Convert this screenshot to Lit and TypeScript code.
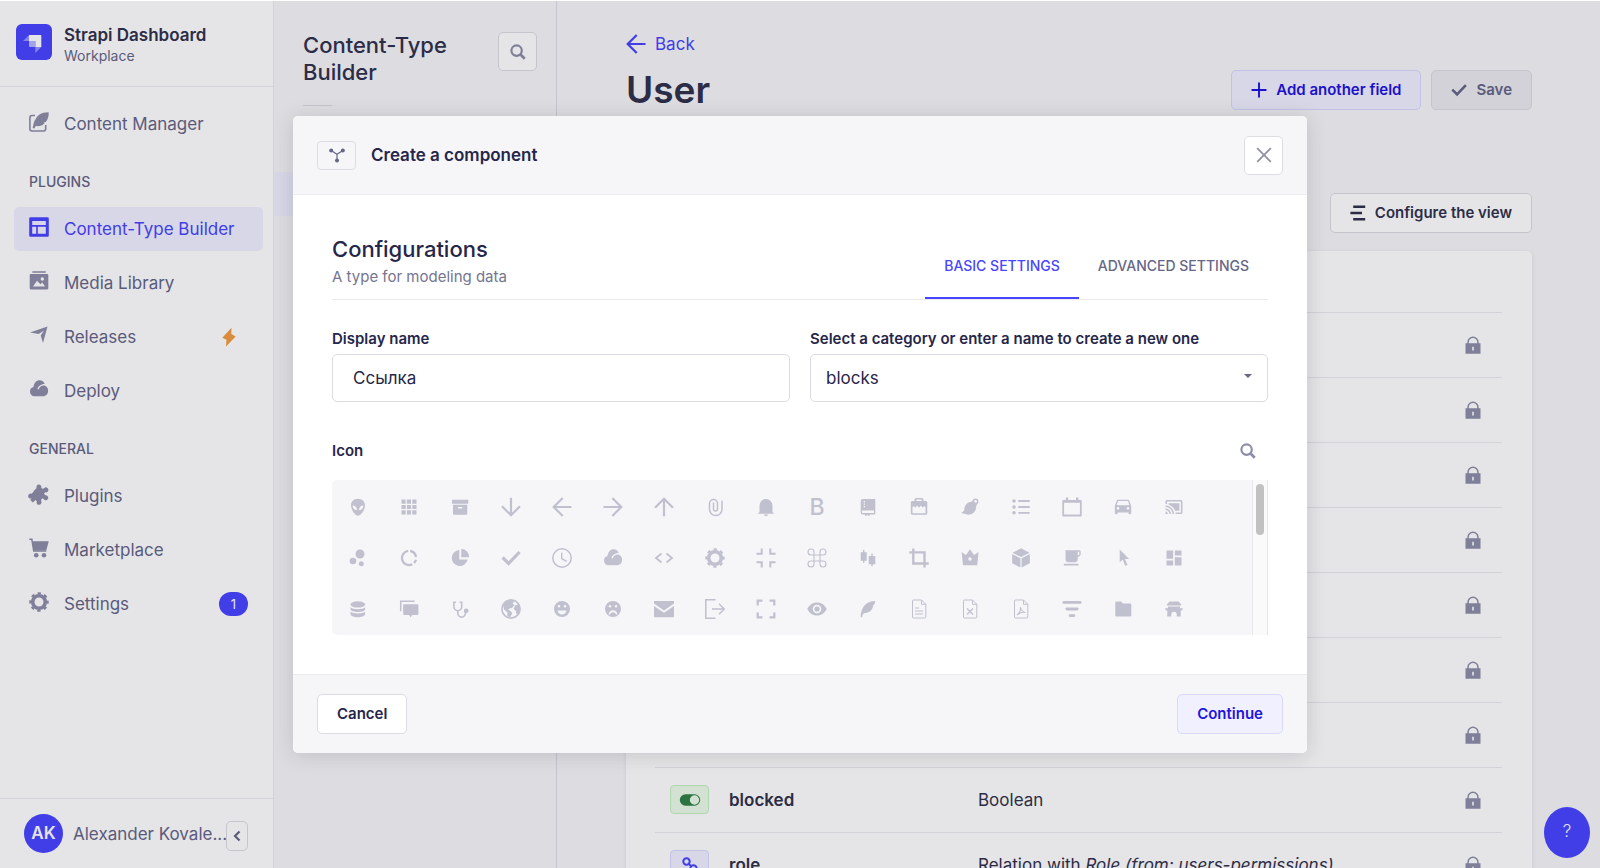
import { LitElement, html, css, svg, nothing, type TemplateResult } from "lit";
import { customElement, property } from "lit/decorators.js";

type Glyph = { box?: string; draw: TemplateResult };

/* Filled shape, even-odd so inner contours become holes. */
const fill = (d: string) => svg`<path fill="currentColor" fill-rule="evenodd" d=${d}></path>`;
/* Outlined shape. */
const line = (d: string, w = 1.5, cap = "butt") =>
  svg`<path fill="none" stroke="currentColor" stroke-width=${w} stroke-linecap=${cap} stroke-linejoin=${cap === "round" ? "round" : "miter"} d=${d}></path>`;
const dot = (x: number, y: number, r: number) => svg`<circle fill="currentColor" cx=${x} cy=${y} r=${r}></circle>`;

const sheet = "M4.5 1h8l4.3 4.3V18a1 1 0 0 1-1 1h-11.300a1 1 0 0 1-1-1V2a1 1 0 0 1 1-1zM12.500 1v4.300h4.300";
const face = "M10 2a8 8 0 1 0 0 16 8 8 0 0 0 0-16zM7 6a1.300 1.300 0 1 1 0 2.600 1.300 1.300 0 0 1 0-2.600zM13 6a1.300 1.300 0 1 1 0 2.600 1.300 1.300 0 0 1 0-2.600z";

const glyphs: Record<string, Glyph> = {
  alien: { draw: fill("M10 1.700c4.200 0 7 2.800 7 6.600 0 4.600-4 10.400-7 10.400S3 12.900 3 8.300c0-3.800 2.800-6.600 7-6.600zM4.700 8.500c0 2.700 1.500 4.600 4.300 4.600 0-2.800-1.700-4.600-4.300-4.600zM15.300 8.500c0 2.700-1.500 4.600-4.300 4.600 0-2.800 1.700-4.600 4.300-4.600z") },
  apps: { draw: fill("M2.500 2.500h4.200v4.200H2.500zM7.900 2.500h4.200v4.200H7.900zM13.300 2.500h4.200v4.200h-4.200zM2.500 7.900h4.200v4.200H2.500zM7.900 7.900h4.200v4.200H7.900zM13.300 7.900h4.200v4.200h-4.200zM2.500 13.300h4.200v4.200H2.500zM7.900 13.300h4.200v4.200H7.900zM13.300 13.300h4.200v4.200h-4.200z") },
  archive: { draw: fill("M2 2.700h16.300v4H2zM3 7.700h14.300v9a1 1 0 0 1-1 1H4a1 1 0 0 1-1-1zM8 10v1.600h4.300V10z") },
  arrowDown: { draw: line("M10 .700v17M1 9.300l9 9 9-9", 2.200) },
  arrowLeft: { draw: line("M19.500 10H2M10.700 1l-9 9 9 9", 2.200) },
  arrowRight: { draw: line("M.500 10H18M9.300 1l9 9-9 9", 2.200) },
  arrowUp: { draw: line("M10 19.300v-17M1 10.700l9-9 9 9", 2.200) },
  attach: { draw: line("M17 3.700v8.600a6.200 6.200 0 0 1-12.500 0V6.500a4 4 0 0 1 8 0V12a2 2 0 0 1-4 0V5.500", 1.500) },
  bell: { draw: fill("M3.500 15V8.500a6.500 6.500 0 0 1 13 0V15l1.700 1.700H1.800zM8 17.600h4a2 1.700 0 0 1-4 0z") },
  bold: { draw: svg`<text x="10" y="18" text-anchor="middle" font-size="23" font-weight="500" fill="currentColor">B</text>` },
  book: { draw: fill("M4.700 2h12.600v15.500h-5.800v1.800L9.300 18l-2.200 1.300v-1.800H4.700a2 2 0 0 1-2-2V4a2 2 0 0 1 2-2zM5.700 4v1.300H7V4zM5.700 6.500v1.300H7V6.500zM5.700 9v1.300H7V9zM5 13.500a1 1 0 0 0 0 2.400h11v-2.400z") },
  briefcase: { draw: fill("M7 1h6a1.500 1.500 0 0 1 1.500 1.500V4h2.300a1.500 1.500 0 0 1 1.500 1.500v10.800a1.500 1.500 0 0 1-1.500 1.500H3.300a1.500 1.500 0 0 1-1.500-1.500V5.500A1.500 1.500 0 0 1 3.300 4h2.200V2.500A1.500 1.500 0 0 1 7 1zM7.300 2.500V4h5.400V2.500zM3.500 10v6.200h13V10l-1.500-.8-1.500 1.600L12 8.500l-2 2.200-2-2.200-1.500 2.300L5 9.200z") },
  brush: { draw: svg`${fill("M1.300 16l3-2.500c-.3-5 2.700-8.300 7.200-8.800l1.700-1.400 3.800 4.200-.8 1.500c.3 5.500-4 8.800-8 8.700z")}${svg`<circle cx="15.500" cy="4.500" r="2.200" fill="none" stroke="currentColor" stroke-width="1.500"></circle>`}` },
  bullets: { draw: svg`${dot(3, 4, 1.800)}${dot(3, 10, 1.800)}${dot(3, 15.800, 1.800)}${line("M7.300 4h11.400M7.300 10h11.400M7.300 15.800h11.400", 1.800)}` },
  calendar: { draw: svg`${line("M1.200 4h17.600v14.500H1.200z", 1.800, "round")}${line("M1 4.500h18M5 .500V4M15.200.500V4", 2.400)}` },
  car: { box: "1 2 22 22", draw: fill("M18.920 6.010C18.720 5.420 18.160 5 17.500 5h-11c-.66 0-1.210.42-1.420 1.010L3 12v8c0 .55.45 1 1 1h1c.55 0 1-.45 1-1v-1h12v1c0 .55.45 1 1 1h1c.55 0 1-.45 1-1v-8l-2.080-5.990zM6.500 16c-.83 0-1.500-.67-1.500-1.500S5.670 13 6.500 13s1.500.67 1.500 1.500S7.330 16 6.500 16zm11 0c-.83 0-1.500-.67-1.500-1.500s.67-1.500 1.500-1.500 1.500.67 1.500 1.500-.67 1.500-1.500 1.500zM5 11l1.500-4.500h11L19 11H5z") },
  cast: { box: "-1 -1 26 26", draw: fill("M1 18v3h3c0-1.660-1.340-3-3-3zm0-4v2c2.760 0 5 2.240 5 5h2c0-3.870-3.130-7-7-7zm18-7H5v1.630c3.960 1.280 7.090 4.410 8.370 8.370H19V7zM1 10v2c4.970 0 9 4.030 9 9h2c0-6.080-4.930-11-11-11zm20-7H3c-1.100 0-2 .9-2 2v3h2V5h18v14h-7v2h7c1.100 0 2-.9 2-2V5c0-1.100-.9-2-2-2z") },
  bubbles: { draw: svg`${dot(12, 6, 4.500)}${dot(5, 13, 3.300)}${dot(13.300, 15.700, 2.500)}` },
  donut: { draw: line("M9.200 2.950A7.100 7.100 0 1 0 13.300 16.300M15 15A7.100 7.100 0 0 0 16.900 11.700M17 9.100A7.100 7.100 0 0 0 11.100 3", 2.300) },
  pie: { draw: fill("M9.300 2a8 8 0 1 0 8.300 9.500H9.300zM11.300 1a7.800 7.800 0 0 1 7.800 8.300h-7.800z") },
  check: { draw: line("M1.600 9.500l6 6L18.600 4", 3.200) },
  clock: { draw: svg`<circle cx="10" cy="10" r="9.200" fill="none" stroke="currentColor" stroke-width="1.500"></circle>${line("M9.700 4.800v5.700l5 2.800", 1.400)}` },
  cloud: { draw: fill("M5.500 17.300a4.800 4.800 0 0 1-1-9.400C5 4 7.600 1.300 10.500 1.300c2.600 0 4.600 1.500 5.200 3.800-4 0-6.300 2.400-7.300 5l1.200.4c1-2.600 2.800-4 5-4 2.600 0 4.500 2.300 4.500 5.300 0 3.200-2.200 5.500-5 5.500z") },
  code: { draw: line("M7.500 5.500L2 10l5.500 4.500M12.500 5.500L18 10l-5.500 4.500", 1.800) },
  cog: { draw: svg`<circle cx="10" cy="10" r="6.300" fill="none" stroke="currentColor" stroke-width="3.600"></circle><circle cx="10" cy="10" r="8.700" fill="none" stroke="currentColor" stroke-width="2" stroke-dasharray="3.416" stroke-dashoffset="1.708"></circle>` },
  collapse: { draw: line("M.500 5.700h5.200V.500M14.300.500v5.200h5.200M.500 14.200h5.200v5.300M19.500 14.200h-5.200v5.300", 2) },
  command: { draw: line("M7 4v12a3 3 0 1 1-3-3h12a3 3 0 1 1-3 3V4a3 3 0 1 1 3 3H4a3 3 0 1 1 3-3z", 1.100) },
  candles: { draw: fill("M5 1.700h1.400v2.500h2.300v8.500H6.400v2H5v-2H2.700V4.200H5zM13.300 5.500h1.400V8h2.600v8.300h-2.600v2h-1.400v-2h-2.600V8h2.600z") },
  crop: { draw: line("M4.300.500v15h15.400M.300 4.400h15.200v15.200", 2.400) },
  crown: { draw: fill("M3 17.300L1.600 4l4.400 3L10 1.300 14 7l4.600-3-1.400 13.300zM10 9.300a1.700 1.700 0 1 0 0 3.400 1.700 1.700 0 0 0 0-3.400z") },
  cube: { draw: fill("M10 .300l8.500 4.500L10 9.100 1.500 4.800zM1.200 6l8.200 4.200v9.400L1.200 15.200zM18.800 6l-8.200 4.200v9.400l8.200-4.400z") },
  cup: { draw: fill("M3.500 2.300h14.200a1.200 1.200 0 0 1 1 1.200v2.600a2.600 2.600 0 0 1-3 2.600v2.600a3 3 0 0 1-3 3H6.500a3 3 0 0 1-3-3zM15.700 3.800v3.400h.8a1 1 0 0 0 .8-1V3.800zM1.800 15.700h14.700v1.800H1.800z") },
  cursor: { draw: fill("M6.700 1.500v12.800l3-2.700 2.400 6.200 2.400-.9-2.600-6h4.200z") },
  dashboard: { box: "0 0 24 24", draw: fill("M3 13h8V3H3v10zm0 8h8v-6H3v6zm10 0h8V11h-8v10zm0-18v6h8V3h-8z") },
  database: { draw: svg`<ellipse cx="9.800" cy="5.400" rx="7.300" ry="3.200" fill="currentColor"></ellipse>${fill("M2.500 8.200c1.500 2.600 13.100 2.600 14.600 0v2.200c-.8 3.300-13.800 3.300-14.600 0zM2.500 12.600c1.500 2.600 13.100 2.600 14.600 0v2.600c-.8 4-13.800 4-14.600 0z")}` },
  discuss: { draw: svg`${line("M1.700 12.300V2.300h14", 1.500)}${fill("M5 5.300h13.600a.8.8 0 0 1 .8.800v9a.8.8 0 0 1-.8.800h-5.400l-1.500 2.500-1.500-2.500H5a.8.8 0 0 1-.8-.8v-9a.8.8 0 0 1 .8-.8z")}` },
  doctor: { draw: svg`${line("M6 3.300H3.900v4.500a3.900 3.900 0 0 0 7.800 0V3.300H9.600M7.800 11.700v2.600a3.800 3.800 0 0 0 7.600 0V13", 1.600)}${dot(16.200, 11.800, 2.400)}` },
  earth: { draw: svg`<circle cx="10" cy="10" r="9.100" fill="none" stroke="currentColor" stroke-width="1.600"></circle>${fill("M2 6C4 2.500 7 1.200 11 1.200l2 1.600-1.500 2L13.500 6l-2.500 3-2.800.5-1 1.500 2.600 1 1.400 2.500L9 18.500 6.300 17l.2-3.500L3 10.500zM14 6.500l4-1.500 1 4-1 5-2.500 1.500-.5-3.500L12.700 10z")}` },
  smile: { draw: fill(face + "M5.500 11.500h9c-.5 2.500-2.300 4-4.500 4s-4-1.500-4.500-4z") },
  sad: { draw: fill(face + "M5.500 15.500c.5-2.700 2.300-4.200 4.500-4.200s4 1.500 4.500 4.200H13c-.5-1.500-1.500-2.300-3-2.300s-2.500.8-3 2.300z") },
  envelope: { draw: fill("M0 2h20v2.600L10 11.500 0 4.600zM0 7l10 6.800L20 7v11.300H0z") },
  exit: { draw: line("M10.500.8H.800v18.400h9.700M7 10h12M14 4.800l5.200 5.200-5.200 5.200", 1.500) },
  expand: { draw: line("M1.700 6.500V1.700h4.800M13.500 1.700h4.800v4.800M1.700 13.500v4.800h4.800M18.300 13.500v4.800h-4.800", 2.200) },
  eye: { draw: fill("M10 3.500c4.500 0 8 2.700 9.700 6.500-1.700 3.800-5.200 6.500-9.700 6.500S2 13.800.300 10C2 6.200 5.500 3.500 10 3.500zM10 5.700a4.300 4.300 0 1 0 0 8.600 4.300 4.300 0 0 0 0-8.600zM10 7.400a2.600 2.600 0 1 1 0 5.200 2.600 2.600 0 0 1 0-5.200z") },
  feather: { draw: fill("M2.700 18.300C2.500 9 7.500 2 17.300 1.900c-.5 2.600-1.300 4.300-3 5.400l.9.300c-1.200 3.600-3.700 6-7.400 6.500-2.200.2-3.200.5-3.600 4.200z") },
  file: { draw: svg`${line(sheet, 1)}${line("M6 9h4M6 12h8M6 15h8", 1)}` },
  fileError: { draw: svg`${line(sheet, 1)}${line("M7 9.500l6 6M13 9.500l-6 6", 1.200)}` },
  filePdf: { draw: svg`${line(sheet, 1)}${line("M9.500 8c.5 3 2 5 5 5.500-3-.6-6 .3-8.500 2.500 2.500-2 3.800-5 3.500-8z", 1.100)}` },
  filter: { draw: line("M1.800 3.400h16.400M4.800 10h10.400M8 16.600h4", 2.800, "round") },
  folder: { draw: fill("M3.300 2.600h4.900l1.800 2h7.300a1 1 0 0 1 1 1v11a1 1 0 0 1-1 1H3.300a1 1 0 0 1-1-1v-13a1 1 0 0 1 1-1z") },
  gate: { draw: fill("M5.500 2.500h9l3 3.200-1 .9h-13l-1-.9zM4 7.500h12v1.700h3l-.9 2.400h-1.400v5.800h-4v-2a2.700 2.700 0 0 0-5.400 0v2h-4v-5.800H1.900L1 9.200h3z") },

  write: { draw: svg`${line("M6 3.500H3A2.200 2.200 0 0 0 .900 5.700v11.100A2.200 2.200 0 0 0 3 19h11.500a2.200 2.200 0 0 0 2.200-2.200V13", 1.600)}${fill("M3.600 16C4.500 12 5 9.500 6.300 7l.2 1.200C7.500 3.500 12 .200 19.700.200c.2 4-.9 7.500-2.900 9.800l-2.200.2 1.200.9c-2.600 2.700-5.500 3.500-9 3l-1.600 2.400z")}` },
  layout: { draw: fill("M1.500.200h17a1.300 1.300 0 0 1 1.300 1.300v17a1.300 1.300 0 0 1-1.300 1.300h-17A1.300 1.300 0 0 1 .200 18.500v-17A1.300 1.300 0 0 1 1.500.200zM3.200 4v4h13.600V4zM3.200 9.700v7h4v-7zM8.800 9.700v7h8v-7z") },
  images: { draw: fill("M3.300.300h13.500v1.400H3.300zM1.800 3h16.400a1.200 1.200 0 0 1 1.100 1.200v13a1.200 1.200 0 0 1-1.100 1.200H1.800A1.200 1.200 0 0 1 .700 17.200v-13A1.200 1.200 0 0 1 1.800 3zM13.300 6.300a1.700 1.700 0 1 0 0 3.400 1.700 1.700 0 0 0 0-3.400zM4 15.500h12L13.300 11.500l-1.800 1.700L8 9.800z") },
  plane: { draw: fill("M1 7.500L18.500 1.500 14 18 11.700 10.500 15 5.500 9.700 9z") },
  bolt: { draw: fill("M12.500.800L3.300 10.800l4.200 2-.5 6.600 9.700-10-4.400-2.300z") },
  puzzle: { draw: fill("M7.600 4A2.500 2.500 0 1 1 12.300 3.700l1.600 1.400 1.400-1.100a2.500 2.500 0 1 1 1 4.300l-1.400 1.500 1.500 1.500a2.500 2.500 0 1 1-.8 4.700l-1.900-1.700-1.600 1.500.3 1.700a2.500 2.500 0 1 1-4.600-.2l-1.300-1.400-2.600 2.700-2.700-2.700 1.400-1.500a2.500 2.500 0 1 1-.2-4.700l2-1.700a2.500 2.500 0 0 1 1.300-2z") },
  cart: { draw: svg`${line("M.300 1.200h2.500l2 11.800h12.500", 1.600)}${fill("M3 3.200h16.800l-2.600 9.300H4.600z")}${dot(7.200, 17.200, 2.300)}${dot(15, 17.200, 2.300)}` },
  chevron: { draw: line("M12.500 5.500L8 10l4.500 4.500", 2.200) },
  search: { draw: svg`<circle cx="8.600" cy="8.600" r="5.200" fill="none" stroke="currentColor" stroke-width="2.200"></circle>${line("M12.300 12.300l4.400 4.400", 2.800)}` },
  plus: { draw: line("M10 .700v18.600M.700 10h18.600", 2.400) },
  close: { draw: line("M3.200 3.200l13.600 13.600M16.800 3.200L3.200 16.800", 1.700) },
  stack: { draw: line("M4 2.300h15M.500 10h14.500M4 17.700h15", 3.200) },
  lock: { draw: fill("M2.500 8.300h1.800V7.200a5.700 5.700 0 0 1 11.400 0v1.100h1.800v10.500H2.500zM5.800 8.300h8.400V7.200a4.200 4.200 0 0 0-8.400 0zM9.200 11.700v3.800h1.600v-3.800z") },
  branch: { draw: svg`${dot(2.700, 4.500, 2.500)}${dot(17.300, 4.500, 2.500)}${dot(10, 17, 2.500)}${line("M2.700 4.500L10 9l7.300-4.500M10 9v7", 1.500)}` },
  toggle: { draw: fill("M5.500 4.300h9a5.700 5.700 0 0 1 0 11.400h-9a5.700 5.700 0 0 1 0-11.400zM14.500 5.300a4.700 4.700 0 1 0 0 9.400 4.700 4.700 0 0 0 0-9.400z") },
  link: { draw: svg`<circle cx="6.500" cy="6.500" r="3.200" fill="none" stroke="currentColor" stroke-width="2"></circle><circle cx="13.500" cy="13.500" r="3.200" fill="none" stroke="currentColor" stroke-width="2"></circle>${line("M8.500 8.500l3 3", 2)}` },
};

const pickerIcons = [
  "alien", "apps", "archive", "arrowDown", "arrowLeft", "arrowRight", "arrowUp", "attach", "bell", "bold", "book", "briefcase", "brush", "bullets", "calendar", "car", "cast",
  "bubbles", "donut", "pie", "check", "clock", "cloud", "code", "cog", "collapse", "command", "candles", "crop", "crown", "cube", "cup", "cursor", "dashboard",
  "database", "discuss", "doctor", "earth", "smile", "sad", "envelope", "exit", "expand", "eye", "feather", "file", "fileError", "filePdf", "filter", "folder", "gate",
];

@customElement("ui-icon")
export class UiIcon extends LitElement {
  @property() name = "";
  static styles = css`
    :host { display: inline-flex; width: 20px; height: 20px; flex: none; }
    svg { width: 100%; height: 100%; display: block; overflow: visible; }
  `;
  render() {
    const g = glyphs[this.name];
    return g ? html`<svg viewBox=${g.box ?? "0 0 20 20"} aria-hidden="true">${g.draw}</svg>` : nothing;
  }
}

const base = css`
  :host, *, *::before, *::after { box-sizing: border-box; }
  :host { font-family: Inter, "Liberation Sans", sans-serif; font-size: 17px; line-height: 24px; color: #32324d; }
  h1, h2, h3, p, ul { margin: 0; padding: 0; font-size: inherit; font-weight: inherit; }
  ul { list-style: none; }
  button, input, select { font: inherit; color: inherit; margin: 0; }
  a { color: inherit; text-decoration: none; }
  .btn {
    display: inline-flex; align-items: center; justify-content: center; gap: 9px; flex: none;
    height: 40px; padding: 0 19px; border: 1px solid #dcdce4; border-radius: 5px;
    background: #fff; font-size: 15px; line-height: 20px; font-weight: 600; white-space: nowrap;
  }
  .btn.secondary { background: #f0f0ff; border-color: #d9d8ff; color: #1f14e0; }
  .btn.disabled { background: #eaeaef; border-color: #dcdce4; color: #666687; }
  .btn ui-icon { width: 16px; height: 16px; }
  .btn.square { width: 39px; height: 39px; padding: 0; color: #8e8ea9; }
  .btn.square ui-icon { width: 20px; height: 20px; }
`;

@customElement("side-nav")
export class SideNav extends LitElement {
  static styles = [base, css`
    :host { display: flex; flex-direction: column; width: 274px; flex: none; background: #fff; border-right: 1px solid #eaeaef; }
    .brand { display: flex; align-items: flex-start; gap: 12px; height: 86px; padding: 23px 16px 0; border-bottom: 1px solid #eaeaef; }
    .logo { width: 36px; height: 36px; flex: none; }
    .name { font-weight: 600; line-height: 22px; }
    .place { font-size: 14px; line-height: 20px; color: #666687; }
    nav { flex: 1; padding: 15px 10px 0 14px; }
    .group { margin: 28px 15px 17px; font-size: 14px; line-height: 16px; font-weight: 500; color: #666687; }
    ul { display: grid; gap: 10px; }
    .item { display: flex; align-items: center; gap: 15px; height: 44px; padding: 0 15px; border-radius: 5px; color: #666687; }
    .item ui-icon { margin-bottom: 4px; color: #8e8ea9; }
    .item span:first-of-type { flex: 1; }
    .item.active { background: #f0f0ff; color: #4945ff; }
    .item.active ui-icon { color: #4945ff; }
    .item ui-icon.bolt { color: #f29d41; margin: 0 9px 0 0; }
    .count { min-width: 29px; height: 24px; border-radius: 12px; background: #4945ff; color: #fff; font-size: 13px; line-height: 24px; text-align: center; }
    .user { display: flex; align-items: center; height: 70px; padding: 0 25px 0 24px; border-top: 1px solid #eaeaef; }
    .avatar { width: 39px; height: 39px; flex: none; border-radius: 50%; background: #4945ff; color: #fff; font-weight: 600; line-height: 39px; text-align: center; }
    .who { flex: 1; min-width: 0; margin-left: 10px; white-space: nowrap; color: #666687; }
    .fold { width: 22px; height: 30px; padding: 0; display: grid; place-items: center; border: 1px solid #dcdce4; border-radius: 5px; background: #fff; color: #666687; margin-top: 5px; }
    .fold ui-icon { width: 20px; height: 20px; }
  `];

  private item(icon: string, label: string, extra: unknown = nothing, active = false) {
    return html`<li><a class="item ${active ? "active" : ""}" href="#"><ui-icon name=${icon}></ui-icon><span>${label}</span>${extra}</a></li>`;
  }

  render() {
    return html`
      <header class="brand">
        <svg class="logo" viewBox="0 0 36 36" aria-hidden="true">
          <rect width="36" height="36" rx="6" fill="#4945ff"></rect>
          <path fill="#fff" d="M13 11h11.500a.8.8 0 0 1 .8.800V23h-6v-6H13z"></path>
          <path fill="#9593ff" d="M13 11v6H7z M19.300 23h6L19.300 29z"></path>
          <path fill="#b7b5ff" d="M13 17h5.500a.8.8 0 0 1 .8.800V23H13.800a.8.8 0 0 1-.8-.8z"></path>
        </svg>
        <div><div class="name">Strapi Dashboard</div><div class="place">Workplace</div></div>
      </header>
      <nav aria-label="Main">
        <ul>${this.item("write", "Content Manager")}</ul>
        <h2 class="group">PLUGINS</h2>
        <ul>
          ${this.item("layout", "Content-Type Builder", nothing, true)}
          ${this.item("images", "Media Library")}
          ${this.item("plane", "Releases", html`<ui-icon class="bolt" name="bolt"></ui-icon>`)}
          ${this.item("cloud", "Deploy")}
        </ul>
        <h2 class="group">GENERAL</h2>
        <ul>
          ${this.item("puzzle", "Plugins")}
          ${this.item("cart", "Marketplace")}
          ${this.item("cog", "Settings", html`<span class="count">1</span>`)}
        </ul>
      </nav>
      <footer class="user">
        <span class="avatar">AK</span>
        <span class="who">Alexander Kovale...</span>
        <button class="fold" aria-label="Collapse the navigation"><ui-icon name="chevron"></ui-icon></button>
      </footer>`;
  }
}

@customElement("sub-nav")
export class SubNav extends LitElement {
  static styles = [base, css`
    :host { display: block; width: 283px; flex: none; border-right: 1px solid #dcdce4; }
    .top { display: flex; justify-content: space-between; align-items: flex-start; gap: 16px; padding: 31px 19px 0 29px; }
    h2 { font-size: 22px; line-height: 27px; font-weight: 500; }
    .rule { width: 29px; height: 1px; margin: 19px 0 0 29px; background: #dcdce4; }
    .current { height: 44px; margin-top: 66px; background: #f0f0ff; }
  `];
  render() {
    return html`
      <div class="top">
        <h2>Content-Type Builder</h2>
        <button class="btn square" aria-label="Search"><ui-icon name="search"></ui-icon></button>
      </div>
      <div class="rule"></div>
      <div class="current"></div>`;
  }
}

type Field = { icon?: string; tone?: string; name?: string; kind?: unknown };
const fields: Field[] = [
  {}, {}, {}, {}, {}, {}, {},
  { icon: "toggle", tone: "green", name: "blocked", kind: "Boolean" },
  { icon: "link", tone: "blue", name: "role", kind: html`Relation with <i>Role (from: users-permissions)</i>` },
];

@customElement("type-view")
export class TypeView extends LitElement {
  static styles = [base, css`
    :host { display: block; flex: 1; min-width: 0; padding: 31px 68px 0 69px; }
    .back { display: flex; align-items: center; gap: 9px; width: max-content; color: #4945ff; }
    .head { display: flex; align-items: center; justify-content: space-between; height: 44px; margin-top: 12px; }
    h1 { font-size: 37px; line-height: 44px; font-weight: 600; }
    .actions { display: flex; gap: 10px; }
    .tools { display: flex; justify-content: flex-end; margin-top: 81px; }
    .card { margin-top: 18px; padding: 0 30px 0 29px; background: #fff; border-radius: 5px; box-shadow: 0 1px 4px rgba(33, 33, 52, 0.1); }
    table { width: 100%; border-collapse: collapse; table-layout: fixed; }
    th { height: 61px; padding: 0; }
    td { height: 65px; padding: 0; border-top: 1px solid #eaeaef; white-space: nowrap; }
    .c-name { width: 323px; }
    .c-lock { width: 39px; }
    .field { display: flex; align-items: center; gap: 20px; padding-left: 15px; font-weight: 600; }
    .tile { display: grid; place-items: center; width: 39px; height: 29px; border: 1px solid; border-radius: 4px; }
    .tile.green { background: #eafbe7; border-color: #c6f0c2; color: #328048; }
    .tile.blue { background: #f0f0ff; border-color: #d9d8ff; color: #4945ff; }
    .lock { color: #8e8ea9; display: block; }
  `];
  render() {
    return html`
      <a class="back" href="#"><ui-icon name="arrowLeft"></ui-icon>Back</a>
      <div class="head">
        <h1>User</h1>
        <div class="actions">
          <button class="btn secondary"><ui-icon name="plus"></ui-icon>Add another field</button>
          <button class="btn disabled" disabled><ui-icon name="check"></ui-icon>Save</button>
        </div>
      </div>
      <div class="tools"><button class="btn"><ui-icon name="stack"></ui-icon>Configure the view</button></div>
      <div class="card">
        <table aria-label="Fields">
          <colgroup><col class="c-name" /><col /><col class="c-lock" /></colgroup>
          <thead><tr><th aria-label="Name"></th><th aria-label="Type"></th><th aria-label="Lock"></th></tr></thead>
          <tbody>
            ${fields.map((f) => html`<tr>
              <td>${f.name ? html`<div class="field"><span class="tile ${f.tone}"><ui-icon name=${f.icon}></ui-icon></span>${f.name}</div>` : nothing}</td>
              <td>${f.kind ?? nothing}</td>
              <td><ui-icon class="lock" name="lock"></ui-icon></td>
            </tr>`)}
          </tbody>
        </table>
      </div>`;
  }
}

@customElement("component-dialog")
export class ComponentDialog extends LitElement {
  static styles = [base, css`
    :host { display: block; width: 1014px; max-width: 100%; background: #fff; border-radius: 5px; overflow: hidden; box-shadow: 0 2px 20px rgba(33, 33, 52, 0.16); color: #26264a; }
    .bar { display: flex; align-items: center; justify-content: space-between; height: 79px; padding: 0 24px; background: #f6f6f9; }
    .bar.top { border-bottom: 1px solid #eaeaef; }
    .bar.bottom { border-top: 1px solid #eaeaef; }
    .title { display: flex; align-items: center; gap: 15px; font-weight: 600; }
    .kind { display: grid; place-items: center; width: 39px; height: 29px; border: 1px solid #dcdce4; border-radius: 4px; color: #666687; }
    .kind ui-icon { width: 16px; height: 16px; }
    .body { padding: 40px 39px 39px; }
    .intro { display: flex; justify-content: space-between; align-items: flex-end; border-bottom: 1px solid #eaeaef; }
    h3 { font-size: 22px; line-height: 28px; font-weight: 500; }
    .hint { font-size: 15px; line-height: 20px; padding: 4px 0 12px; color: #75758f; }
    .tabs { display: flex; }
    .tab { height: 64px; padding: 0 19px; border: 0; border-bottom: 2px solid transparent; background: none; font-size: 14px; font-weight: 500; color: #666687; white-space: nowrap; }
    .tab.on { color: #4945ff; border-color: #4945ff; }
    .fields { display: grid; grid-template-columns: 1fr 1fr; gap: 20px; margin-top: 29px; }
    label, .label { display: block; font-size: 15px; line-height: 20px; font-weight: 600; }
    .control { display: block; width: 100%; height: 48px; margin-top: 5px; border: 1px solid #dcdce4; border-radius: 5px; background: #fff; }
    input.control { padding: 0 20px; }
    .pick { position: relative; }
    select.control { appearance: none; padding: 0 15px; }
    .pick::after { content: ""; position: absolute; right: 16px; bottom: 24px; border: 4px solid transparent; border-top-color: #666687; border-bottom: 0; pointer-events: none; }
    .iconbar { display: flex; align-items: center; justify-content: space-between; margin-top: 34px; padding-right: 10px; height: 30px; }
    .find { display: grid; place-items: center; width: 20px; height: 20px; padding: 0; border: 0; background: none; color: #8e8ea9; }
    .picker { display: flex; justify-content: space-between; margin-top: 14px; border-radius: 5px; background: #f6f6f9; }
    .grid { display: grid; grid-template-columns: repeat(17, 51px); grid-auto-rows: 51px; padding: 1px 0; color: #c0c0cf; }
    .cell { display: grid; place-items: center; }
    .cell > * { grid-area: 1 / 1; }
    .cell input { appearance: none; width: 20px; height: 20px; }
    .track { width: 16px; padding: 4px 3px; background: #fafafa; border: solid #e8e8e8; border-width: 0 1px; }
    .thumb { width: 8px; height: 51px; border-radius: 4px; background: #c1c1c1; }
  `];
  render() {
    return html`
      <header class="bar top">
        <h2 class="title"><span class="kind"><ui-icon name="branch"></ui-icon></span>Create a component</h2>
        <button class="btn square" aria-label="Close"><ui-icon name="close"></ui-icon></button>
      </header>
      <div class="body">
        <div class="intro">
          <div><h3>Configurations</h3><p class="hint">A type for modeling data</p></div>
          <div class="tabs" role="tablist">
            <button class="tab on" role="tab" aria-selected="true">BASIC SETTINGS</button>
            <button class="tab" role="tab" aria-selected="false">ADVANCED SETTINGS</button>
          </div>
        </div>
        <div class="fields">
          <div><label for="display">Display name</label><input class="control" id="display" type="text" value="Ссылка" /></div>
          <div class="pick">
            <label for="category">Select a category or enter a name to create a new one</label>
            <select class="control" id="category"><option>blocks</option></select>
          </div>
        </div>
        <div class="iconbar"><span class="label" id="icons">Icon</span><button class="find" aria-label="Search icons"><ui-icon name="search"></ui-icon></button></div>
        <div class="picker">
          <div class="grid" role="radiogroup" aria-labelledby="icons">
            ${pickerIcons.map((n) => html`<label class="cell"><input type="radio" name="icon" value=${n} aria-label=${n} /><ui-icon name=${n}></ui-icon></label>`)}
          </div>
          <div class="track"><div class="thumb"></div></div>
        </div>
      </div>
      <footer class="bar bottom">
        <button class="btn">Cancel</button>
        <button class="btn secondary">Continue</button>
      </footer>`;
  }
}

@customElement("app-root")
export class AppRoot extends LitElement {
  static styles = [base, css`
    :host { display: block; position: relative; height: 100vh; overflow: hidden; background: #f6f6f9; border-top: 1px solid #fff; }
    .shell { display: flex; height: 100%; }
    .help { position: absolute; right: 10px; bottom: 10px; width: 46px; height: 51px; padding: 0 0 3px; border: 0; border-radius: 50%; background: #4945ff; color: #fff; font-weight: 300; }
    .veil { position: absolute; inset: 0; display: flex; align-items: center; justify-content: center; background: rgba(3, 3, 20, 0.1); }
  `];
  render() {
    return html`
      <div class="shell">
        <side-nav></side-nav>
        <sub-nav></sub-nav>
        <type-view></type-view>
      </div>
      <button class="help" aria-label="Help">?</button>
      <div class="veil"><component-dialog role="dialog" aria-modal="true" aria-label="Create a component"></component-dialog></div>`;
  }
}
